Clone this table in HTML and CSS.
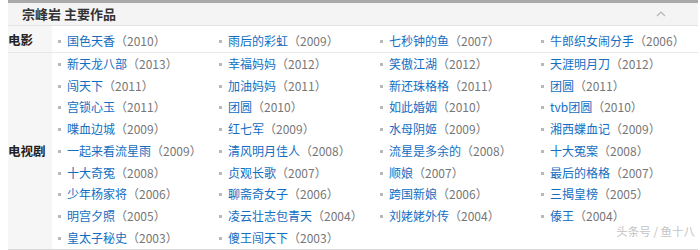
FILE: index.html
```html
<!DOCTYPE html>
<html lang="zh">
<head>
<meta charset="utf-8">
<link rel="stylesheet" href="styles.css">
</head>
<body>
<div class="box">
  <div class="head">
    <span class="title">宗峰岩 主要作品</span>
    <svg class="chev" width="10" height="6" viewBox="0 0 10 6"><path d="M1 5 L5 1 L9 5" fill="none" stroke="#b5b5b5" stroke-width="1.2"/></svg>
  </div>
  <div class="group film">
    <div class="label">电影</div>
    <ul class="list">
      <li><a>国色天香</a><span class="yr">（2010）</span></li>
      <li><a>雨后的彩虹</a><span class="yr">（2009）</span></li>
      <li><a>七秒钟的鱼</a><span class="yr">（2007）</span></li>
      <li><a>牛郎织女闹分手</a><span class="yr">（2006）</span></li>
    </ul>
  </div>
  <div class="group tv">
    <div class="label">电视剧</div>
    <ul class="list">
      <li><a>新天龙八部</a><span class="yr">（2013）</span></li>
      <li><a>幸福妈妈</a><span class="yr">（2012）</span></li>
      <li><a>笑傲江湖</a><span class="yr">（2012）</span></li>
      <li><a>天涯明月刀</a><span class="yr">（2012）</span></li>
      <li><a>闯天下</a><span class="yr">（2011）</span></li>
      <li><a>加油妈妈</a><span class="yr">（2011）</span></li>
      <li><a>新还珠格格</a><span class="yr">（2011）</span></li>
      <li><a>团圆</a><span class="yr">（2011）</span></li>
      <li><a>宫锁心玉</a><span class="yr">（2011）</span></li>
      <li><a>团圆</a><span class="yr">（2010）</span></li>
      <li><a>如此婚姻</a><span class="yr">（2010）</span></li>
      <li><a>tvb团圆</a><span class="yr">（2010）</span></li>
      <li><a>喋血边城</a><span class="yr">（2009）</span></li>
      <li><a>红七军</a><span class="yr">（2009）</span></li>
      <li><a>水母阴姬</a><span class="yr">（2009）</span></li>
      <li><a>湘西蝶血记</a><span class="yr">（2009）</span></li>
      <li><a>一起来看流星雨</a><span class="yr">（2009）</span></li>
      <li><a>清风明月佳人</a><span class="yr">（2008）</span></li>
      <li><a>流星是多余的</a><span class="yr">（2008）</span></li>
      <li><a>十大冤案</a><span class="yr">（2008）</span></li>
      <li><a>十大奇冤</a><span class="yr">（2008）</span></li>
      <li><a>贞观长歌</a><span class="yr">（2007）</span></li>
      <li><a>顺娘</a><span class="yr">（2007）</span></li>
      <li><a>最后的格格</a><span class="yr">（2007）</span></li>
      <li><a>少年杨家将</a><span class="yr">（2006）</span></li>
      <li><a>聊斋奇女子</a><span class="yr">（2006）</span></li>
      <li><a>跨国新娘</a><span class="yr">（2006）</span></li>
      <li><a>三揭皇榜</a><span class="yr">（2005）</span></li>
      <li><a>明宫夕照</a><span class="yr">（2005）</span></li>
      <li><a>凌云壮志包青天</a><span class="yr">（2004）</span></li>
      <li><a>刘姥姥外传</a><span class="yr">（2004）</span></li>
      <li><a>傣王</a><span class="yr">（2004）</span></li>
      <li><a>皇太子秘史</a><span class="yr">（2003）</span></li>
      <li><a>傻王闯天下</a><span class="yr">（2003）</span></li>
    </ul>
    <div class="mark">头条号 / 鱼十八</div>
  </div>
</div>
</body>
</html>
```
FILE: styles.css
```css
html, body {
  margin: 0;
  padding: 0;
  background: #fff;
}
body {
  font-family: "Noto Sans CJK SC", "Liberation Sans", sans-serif;
  font-size: 12px;
  color: #333;
}
.box {
  margin-left: 8px;
  width: 690px;
  border-top: 3px solid #a9a9a9;
  border-bottom: 1px solid #d9d9d9;
}
.head {
  height: 22px;
  background: #f4f4f4;
  border-bottom: 1px solid #e3e3e3;
  display: flex;
  align-items: center;
  justify-content: space-between;
  padding: 0 32px 0 14px;
}
.title {
  font-size: 13px;
  font-weight: bold;
  color: #333;
  line-height: 20px;
}
.chev {
  display: block;
}
.group {
  display: flex;
  position: relative;
}
.film {
  border-bottom: 1px solid #e8e8e8;
}
.label {
  width: 44px;
  flex: none;
  background: #f6f6f6;
  font-size: 12.5px;
  font-weight: bold;
  color: #222;
  display: flex;
  align-items: center;
}
.film .label {
  padding-top: 2px;
}
.list {
  list-style: none;
  margin: 0;
  padding: 0 0 0 6px;
  display: grid;
  grid-template-columns: repeat(4, 161px);
}
.film .list {
  padding-top: 4px;
}
.list li {
  line-height: 21.75px;
  white-space: nowrap;
}
.list li::before {
  content: "";
  display: inline-block;
  width: 3px;
  height: 3px;
  background: #b8b8b8;
  margin-right: 6px;
  vertical-align: middle;
  position: relative;
  top: -1px;
}
.list a {
  color: #136ec2;
}
.yr {
  color: #777;
}
.mark {
  position: absolute;
  right: 3px;
  bottom: 10px;
  font-size: 11.5px;
  color: #c4c4c4;
}
```
